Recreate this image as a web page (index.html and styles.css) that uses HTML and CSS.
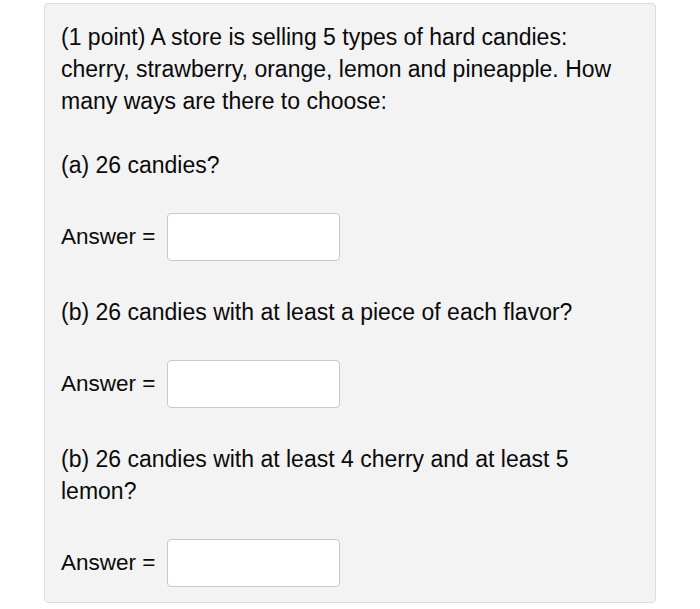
FILE: index.html
```html
<!DOCTYPE html>
<html>
<head>
<meta charset="utf-8">
<link rel="stylesheet" href="styles.css">
</head>
<body>
<div class="problem">
  <p class="text">(1 point) A store is selling 5 types of hard candies: cherry, strawberry, orange, lemon and pineapple. How many ways are there to choose:</p>
  <p class="text">(a) 26 candies?</p>
  <div class="answer"><span>Answer =</span><span class="box"></span></div>
  <p class="text">(b) 26 candies with at least a piece of each flavor?</p>
  <div class="answer"><span>Answer =</span><span class="box"></span></div>
  <p class="text">(b) 26 candies with at least 4 cherry and at least 5 lemon?</p>
  <div class="answer"><span>Answer =</span><span class="box"></span></div>
</div>
</body>
</html>
```
FILE: styles.css
```css
html, body {
  margin: 0;
  background: #ffffff;
}
body {
  padding: 3px 0 0 44px;
  font-family: "Liberation Sans", Arial, sans-serif;
  color: #0a0a0a;
}
.problem {
  box-sizing: border-box;
  width: 612px;
  height: 600px;
  background: #f3f3f3;
  border: 1px solid #dcdcdc;
  border-radius: 4px;
  padding: 17px 16px 15px 16px;
  display: flex;
  flex-direction: column;
}
.text {
  margin: 0 0 32px 0;
  font-size: 23px;
  line-height: 32px;
  width: 560px;
}
.answer {
  display: flex;
  align-items: center;
  gap: 12px;
  font-size: 22.5px;
  margin-bottom: 35px;
}
.box {
  display: block;
  box-sizing: border-box;
  width: 173px;
  height: 48px;
  background: #fff;
  border: 1px solid #c8c8c8;
  border-radius: 4px;
}
```
